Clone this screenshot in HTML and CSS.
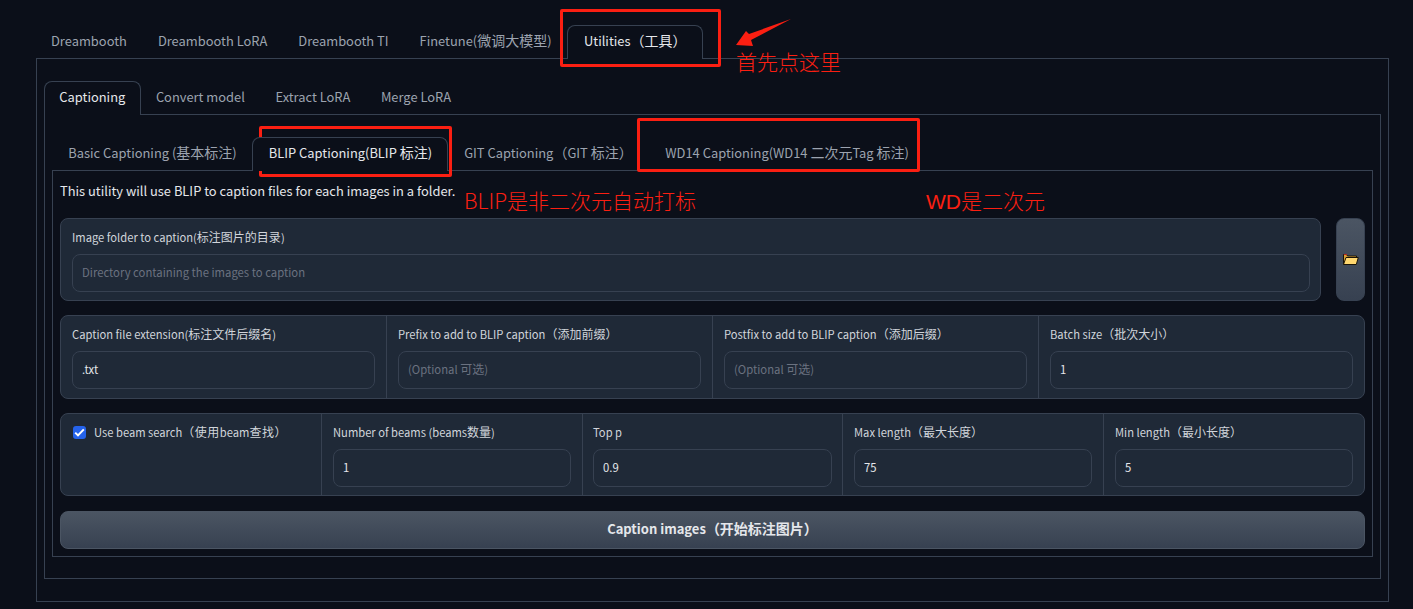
FILE: index.html
```html
<!DOCTYPE html>
<html lang="zh">
<head>
<meta charset="utf-8">
<title>Utilities</title>
<link rel="stylesheet" href="styles.css">
</head>
<body>
<main class="app">
  <nav class="tabs top-tabs">
    <button class="tab">Dreambooth</button>
    <button class="tab">Dreambooth LoRA</button>
    <button class="tab">Dreambooth TI</button>
    <button class="tab">Finetune(<span class="z">微调大模型</span>)</button>
    <button class="tab active">Utilities<span class="z">（工具）</span></button>
  </nav>
  <section class="panel panel-outer">
    <nav class="tabs">
      <button class="tab active">Captioning</button>
      <button class="tab">Convert model</button>
      <button class="tab">Extract LoRA</button>
      <button class="tab">Merge LoRA</button>
    </nav>
    <section class="panel panel-mid">
      <nav class="tabs tabs-third">
        <button class="tab">Basic Captioning (<span class="z">基本标注</span>)</button>
        <button class="tab active">BLIP Captioning(BLIP <span class="z">标注</span>)</button>
        <button class="tab">GIT Captioning<span class="z">（</span>GIT <span class="z">标注）</span></button>
        <button class="tab tab-wd">WD14 Captioning(WD14 <span class="z">二次元</span>Tag <span class="z">标注</span>)</button>
      </nav>
      <section class="panel panel-inner">
        <p class="intro">This utility will use BLIP to caption files for each images in a folder.</p>
        <div class="folder-row">
          <div class="group grow">
            <label class="cell cell-wide">
              <span class="label">Image folder to caption(<span class="z">标注图片的目录</span>)</span>
              <span class="input placeholder">Directory containing the images to caption</span>
            </label>
          </div>
          <button class="folder-btn" aria-label="Open folder">
            <svg width="17" height="13" viewBox="0 0 17 13">
              <path d="M1.500 1.500h3l1 1.500h9v2h-9l-2 6.500h-2z" fill="#d9a035" stroke="#1a1408"/>
              <path d="M1.500 11.500l2.500-7h12.300l-2 7z" fill="#ffd76e" stroke="#1a1408"/>
              <path d="M2 1h3v1H2z" fill="#b3261e"/>
            </svg>
          </button>
        </div>
        <div class="group row-four">
          <label class="cell"><span class="label">Caption file extension(<span class="z">标注文件后缀名</span>)</span><span class="input">.txt</span></label>
          <label class="cell"><span class="label">Prefix to add to BLIP caption<span class="z">（添加前缀）</span></span><span class="input placeholder">(Optional <span class="z">可选</span>)</span></label>
          <label class="cell"><span class="label">Postfix to add to BLIP caption<span class="z">（添加后缀）</span></span><span class="input placeholder">(Optional <span class="z">可选</span>)</span></label>
          <label class="cell"><span class="label">Batch size<span class="z">（批次大小）</span></span><span class="input">1</span></label>
        </div>
        <div class="group row-five">
          <label class="cell check-cell">
            <span class="checkbox"><svg width="11" height="9" viewBox="0 0 11 9"><path d="M1.200 4.600l2.800 2.800 5.800-6" fill="none" stroke="#fff" stroke-width="2"/></svg></span>
            <span class="label">Use beam search<span class="z">（使用</span>beam<span class="z">查找）</span></span>
          </label>
          <label class="cell"><span class="label">Number of beams (beams<span class="z">数量</span>)</span><span class="input">1</span></label>
          <label class="cell cell-narrow"><span class="label">Top p</span><span class="input">0.9</span></label>
          <label class="cell"><span class="label">Max length<span class="z">（最大长度）</span></span><span class="input">75</span></label>
          <label class="cell"><span class="label">Min length<span class="z">（最小长度）</span></span><span class="input">5</span></label>
        </div>
        <button class="primary">Caption images<span class="z">（开始标注图片）</span></button>
      </section>
    </section>
  </section>
</main>

<div class="mark mark-a"></div>
<div class="mark mark-b"></div>
<div class="mark mark-c"></div>
<svg class="arrow" width="60" height="32" viewBox="0 0 60 32"><path d="M1 27L11 13 14 16 56 1 16 22 18 28z" fill="#fb1f12"/></svg>
<span class="note note-a">首先点这里</span>
<span class="note note-b">BLIP是非二次元自动打标</span>
<span class="note note-c"><span class="lat">WD</span>是二次元</span>
</body>
</html>
```
FILE: styles.css
```css
* { box-sizing: border-box; }
html, body { margin: 0; height: 609px; overflow: hidden; }
body {
  background: #0b0f19;
  color: #e5e7eb;
  font-family: "Noto Sans CJK SC", "Noto Sans", sans-serif;
  font-size: 13px;
  position: relative;
}
button { font: inherit; }
.app { padding: 25px 24px 0 36px; }

.tabs { display: flex; height: 34px; margin-bottom: -1px; position: relative; z-index: 1; }
.top-tabs { margin-left: -0.5px; }
.tabs-third { margin-left: 0.5px; }
.tab {
  background: none;
  border: 1px solid transparent;
  border-bottom: 0;
  border-radius: 8px 8px 0 0;
  color: #9ca3af;
  padding: 0 14.3px 4px;
  height: 34px;
  white-space: nowrap;
  font-size: 12.9px;
}
.top-tabs .tab { padding: 0 14.5px 4px; }
.tabs-third .tab { padding: 0 14.8px 4px; }
.tab.active { color: #e5e7eb; border-color: #374151; background: #0b0f19; }
.top-tabs .tab.active { padding: 0 16px 4px; }
.tabs-third .tab.active { padding: 0 15.3px 4px; }
.tab-wd { margin-left: 1px; }
.z { font-size: 14px; line-height: 1; }
.label .z, .input .z { font-size: 12px; }
.primary .z { font-size: 14px; }

.panel { border: 1px solid #374151; padding: 0 7px; }
.panel-outer { height: 544px; padding-top: 22px; }
.panel-mid { height: 465px; padding-top: 22px; }
.panel-inner { height: 387px; padding: 0 7px; }

.intro { margin: 0; height: 47px; padding-top: 8px; line-height: 24px; font-size: 12.9px; color: #e5e7eb; }

.group {
  background: #1f2937;
  border: 1px solid #374151;
  border-radius: 8px;
  display: grid;
  overflow: hidden;
}
.folder-row { display: flex; gap: 15px; height: 83px; }
.grow { flex: 1; }
.row-four { grid-template-columns: 325px 326px 326px 1fr; height: 84px; margin-top: 14px; }
.row-five { grid-template-columns: 260px 261px 260px 261px 1fr; height: 83px; margin-top: 14px; }

.cell {
  display: flex;
  flex-direction: column;
  padding: 9px 11px 10px;
  border-left: 1px solid #374151;
}
.cell:first-child { border-left: 0; }
.cell-wide { padding-right: 10px; }
.cell-narrow { padding-left: 10px; padding-right: 10px; }
.label { font-size: 11.2px; line-height: 18px; color: #d1d5db; white-space: nowrap; margin-bottom: 8px; }
.input {
  display: block;
  height: 38px;
  border: 1px solid #374151;
  border-radius: 8px;
  background: #1f2937;
  font-size: 11.3px;
  line-height: 35px;
  padding: 0 9px;
  color: #e5e7eb;
}
.placeholder { color: #6b7280; }

.folder-btn {
  width: 29px;
  border: 1px solid #374151;
  border-radius: 8px;
  background: linear-gradient(#4b5563, #374151);
  display: flex;
  align-items: center;
  justify-content: center;
  padding: 0;
}

.check-cell { flex-direction: row; align-items: flex-start; gap: 8px; padding-left: 12px; }
.check-cell .z { letter-spacing: 0.5px; }
.checkbox {
  width: 13px; height: 13px; margin-top: 3px;
  border-radius: 3px;
  background: #2563eb;
  display: flex; align-items: center; justify-content: center;
}

.primary {
  display: block;
  width: 100%;
  height: 38px;
  margin-top: 15px;
  border: 1px solid #4b5563;
  border-radius: 8px;
  background: linear-gradient(#4b5563, #374151);
  color: #e5e7eb;
  font-weight: 600;
  font-size: 13px;
  line-height: 32px;
  padding: 0 0 3px;
}

.mark { position: absolute; border: 3px solid #fb1f12; border-radius: 2px; }
.mark-a { left: 560px; top: 9px; width: 161px; height: 58px; }
.mark-b { left: 259px; top: 126px; width: 193px; height: 51px; }
.mark-c { left: 637px; top: 118px; width: 283px; height: 54px; }
.arrow { position: absolute; left: 735px; top: 18px; }
.note { position: absolute; color: #fb1f12; font-size: 21px; line-height: 28px; font-weight: 300; white-space: nowrap; }
.lat { font-family: "Liberation Sans", sans-serif; }
.note-a { left: 736px; top: 47px; }
.note-b { left: 464px; top: 186px; }
.note-c { left: 926px; top: 186px; }
```
